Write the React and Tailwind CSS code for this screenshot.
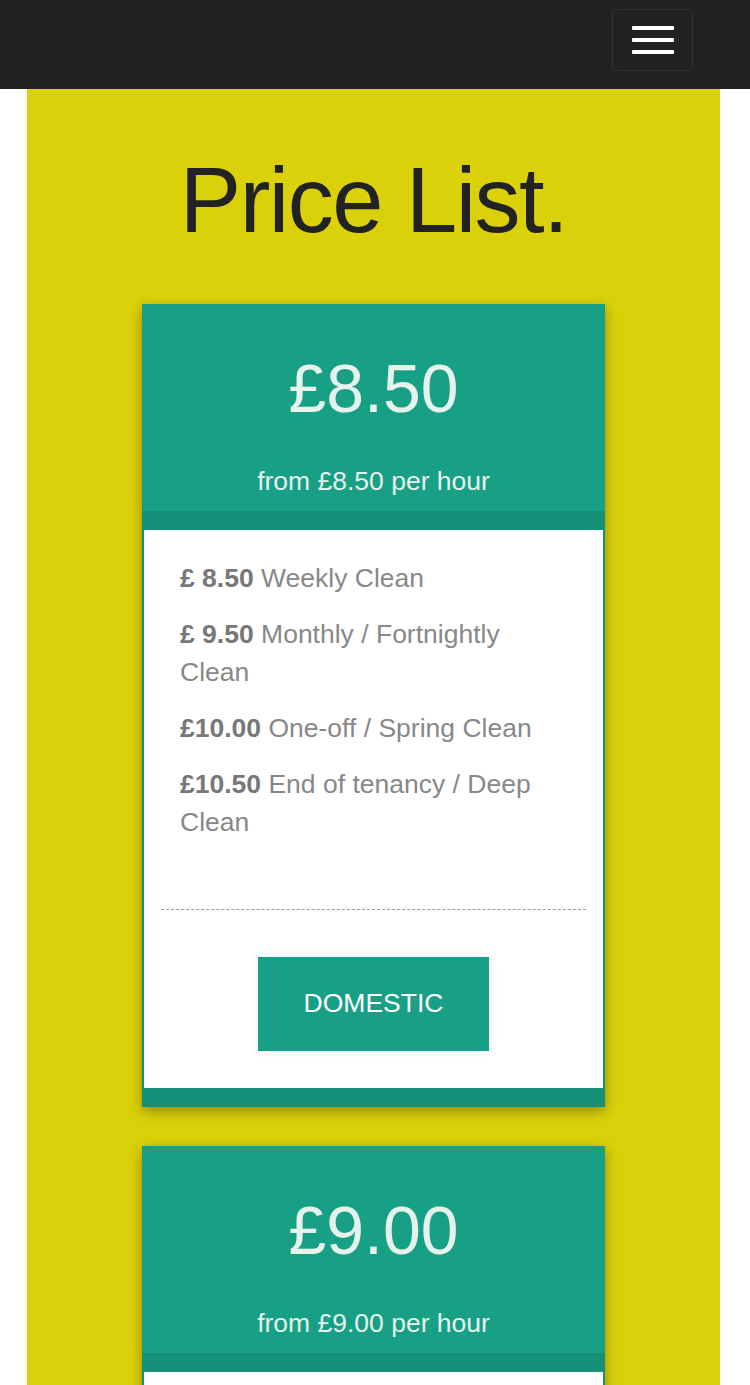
const plans = [
  {
    price: '£8.50',
    from: 'from £8.50 per hour',
    items: [
      ['£ 8.50', 'Weekly Clean'],
      ['£ 9.50', 'Monthly / Fortnightly Clean'],
      ['£10.00', 'One-off / Spring Clean'],
      ['£10.50', 'End of tenancy / Deep Clean'],
    ],
    label: 'Domestic',
  },
  {
    price: '£9.00',
    from: 'from £9.00 per hour',
    items: [
      ['£ 9.00', 'Office Clean'],
      ['£10.00', 'Commercial Clean'],
    ],
    label: 'Commercial',
  },
];

function Navbar() {
  return (
    <div className="h-[89px] bg-[#222222] flex items-start justify-end pr-[57px] pt-[9px]">
      <button className="w-[81px] h-[62px] rounded-[6px] border border-[#333333] flex flex-col items-center justify-center gap-[8.5px]">
        <span className="block w-[42px] h-[3.5px] bg-white rounded-[1px]" />
        <span className="block w-[42px] h-[3.5px] bg-white rounded-[1px]" />
        <span className="block w-[42px] h-[3.5px] bg-white rounded-[1px]" />
      </button>
    </div>
  );
}

function PriceCard({ plan }) {
  return (
    <div className="w-[463px] mx-auto bg-[#168f78] shadow-[0_4px_12px_rgba(0,0,0,0.35)] pb-[19px]">
      <div className="bg-[#17a086] pt-[50px] pb-[17px] text-center text-[#e6f2ec]">
        <div className="text-[68px] leading-[68px]">{plan.price}</div>
        <div className="mt-[46px] text-[26.5px] leading-[26px]">{plan.from}</div>
      </div>
      <div className="h-[19px]" />
      <div className="bg-white mx-[2px] pt-[29px] pb-[37px]">
        <ul className="pl-[36px] pr-[40px] text-[26.5px] leading-[38px] text-[#888888]">
          {plan.items.map(([p, t], i) => (
            <li key={i} className={i > 0 ? 'mt-[18px]' : ''}>
              <span className="font-bold text-[#777777]">{p}</span> {t}
            </li>
          ))}
        </ul>
        <div className="mx-[17px] mt-[68px] border-t border-dashed border-[#9a9a9a]" />
        <div className="flex justify-center mt-[47px]">
          <button className="w-[231px] h-[94px] bg-[#17a086] text-white text-[26.5px] uppercase shadow-[0_0_10px_rgba(0,0,0,0.08)]">
            {plan.label}
          </button>
        </div>
      </div>
    </div>
  );
}

export default function App() {
  return (
    <div className="min-h-screen bg-white font-['Liberation_Sans',Arial,sans-serif]">
      <Navbar />
      <div className="ml-[27px] w-[693px] bg-[#dbd10a] pt-[61px] pb-[40px]">
        <h1 className="text-center text-[92px] leading-[100px] text-[#222222] tracking-[-1.5px]">
          Price List.
        </h1>
        <div className="mt-[54px] flex flex-col gap-[39px]">
          {plans.map((p) => (
            <PriceCard key={p.price} plan={p} />
          ))}
        </div>
      </div>
    </div>
  );
}
